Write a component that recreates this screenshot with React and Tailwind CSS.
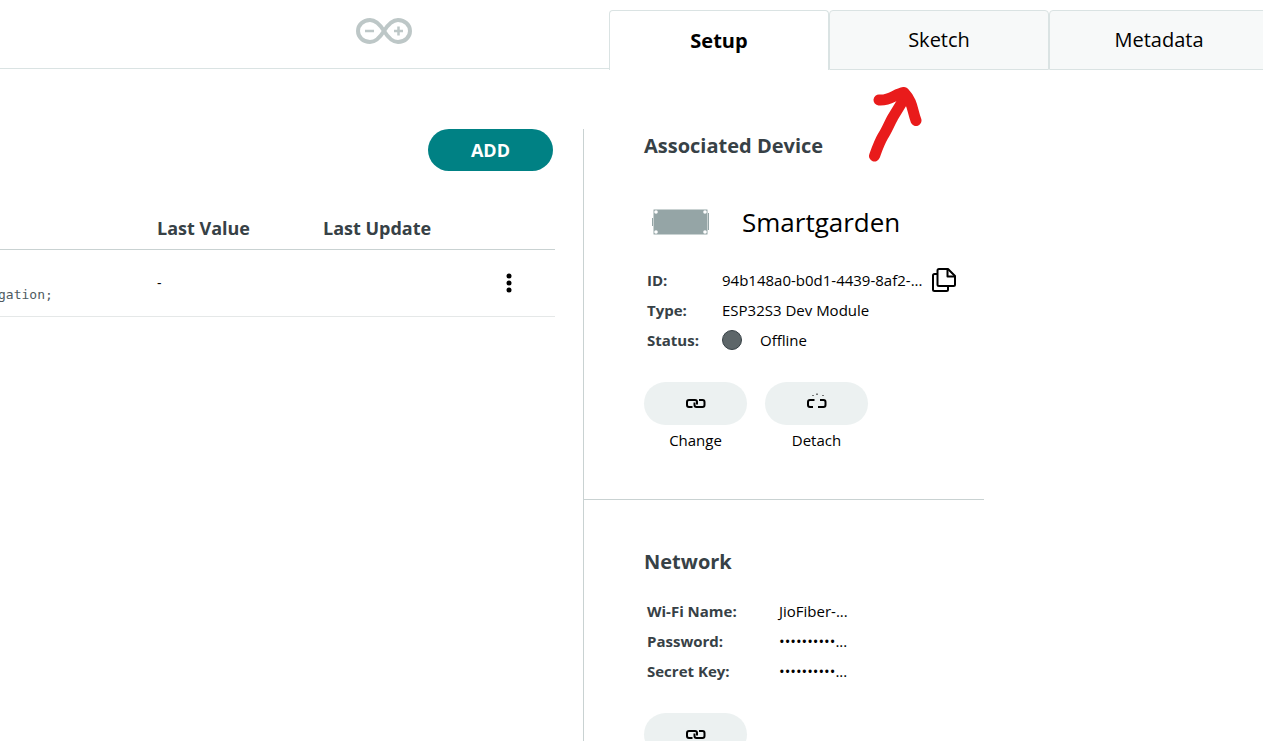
import { useState } from 'react'

const tabs = ['Setup', 'Sketch', 'Metadata']

const deviceButtons = [
  { label: 'Change', icon: LinkIcon },
  { label: 'Detach', icon: UnlinkIcon },
]

const network = [
  { label: 'Wi-Fi Name:', value: 'JioFiber-...' },
  { label: 'Password:', value: '••••••••••...' },
  { label: 'Secret Key:', value: '••••••••••...' },
]

function Logo() {
  return (
    <svg width="56" height="26" viewBox="0 0 56 26" fill="none" stroke="#bdc7c7">
      <path
        d="M28 13C24 6.500 20 2 14 2C7 2 2 7 2 13S7 24 14 24C20 24 24 19.500 28 13C32 6.500 36 2 42 2C49 2 54 7 54 13S49 24 42 24C36 24 32 19.500 28 13Z"
        strokeWidth="4"
      />
      <path d="M9 13H18M38 13H47M42.500 8.500V17.500" strokeWidth="2.500" />
    </svg>
  )
}

function Arrow() {
  return (
    <svg
      className="absolute left-[259px] top-[75px] pointer-events-none"
      width="55"
      height="78"
      viewBox="868 85 55 78"
      fill="none"
      stroke="#e91b1b"
      strokeLinecap="round"
      strokeLinejoin="round"
      strokeWidth="11"
    >
      <path d="M874.500 156C877 149 879 143 883 136C887 130 889 124 893 117L904 99" />
      <path d="M879 100C890 101 895 94 904 92.500C913 102 912 110 916 120.500" />
    </svg>
  )
}

function BoardIcon() {
  return (
    <svg width="58" height="28" viewBox="0 0 58 28">
      <rect x="0" y="10" width="3" height="8" fill="#95a5a6" />
      <rect x="55" y="5" width="2" height="17" fill="#95a5a6" />
      <rect x="1.500" y="1.500" width="54" height="25" rx="1" fill="#95a5a6" stroke="#c9d2d2" />
      <g fill="#fff">
        <circle cx="4" cy="4" r="1.800" />
        <circle cx="53" cy="4" r="1.800" />
        <circle cx="4" cy="24" r="1.800" />
        <circle cx="53" cy="24" r="1.800" />
      </g>
    </svg>
  )
}

function CopyIcon() {
  return (
    <svg width="24" height="24" viewBox="0 0 24 24" fill="none" stroke="#000" strokeWidth="2" strokeLinejoin="round">
      <path d="M5.500 6H2.500Q1 6 1 7.500V21.500Q1 23 2.500 23H14.500Q16 23 16 21.500V18.500" />
      <path d="M7 1H16L23 8V16.500Q23 18 21.500 18H7Q5.500 18 5.500 16.500V2.500Q5.500 1 7 1Z" />
      <path d="M15.500 1V8.500H23" />
    </svg>
  )
}

function LinkIcon() {
  return (
    <svg width="21" height="21" viewBox="0 0 21 21" fill="none" stroke="#000" strokeWidth="2">
      <path d="M7.500 14H4Q2 14 2 12V9Q2 7 4 7H10Q12 7 12 9V11.500" />
      <path d="M14 7H17.500Q19.500 7 19.500 9V12Q19.500 14 17.500 14H11.500Q9.500 14 9.500 12V9.500" />
    </svg>
  )
}

function UnlinkIcon() {
  return (
    <svg width="21" height="21" viewBox="0 0 21 21" fill="none" stroke="#000" strokeWidth="2">
      <path d="M8.500 7H4Q2 7 2 9V12Q2 14 4 14H7" />
      <path d="M14 7H17.500Q19.500 7 19.500 9V12Q19.500 14 17.500 14H12" />
      <path d="M6.500 2L7.500 3M11 0.500V2M17.500 2L16.500 3" strokeWidth="1" />
    </svg>
  )
}

function ActionButton({ label, icon: Icon }) {
  return (
    <div className="flex flex-col items-center w-[103px]">
      <button
        type="button"
        aria-label={label}
        className="flex items-center justify-center w-full h-[43px] rounded-full bg-[#ecf1f1] hover:bg-[#dae3e3]"
      >
        <Icon />
      </button>
      <span className="mt-[3px] text-[15px] leading-6">{label}</span>
    </div>
  )
}

function App() {
  const [active, setActive] = useState('Setup')

  return (
    <div className="h-screen overflow-hidden bg-white text-black font-['Open_Sans',sans-serif]">
      <header className="flex items-start">
        <div className="flex flex-1 justify-end h-[69px] pt-[18px] pr-[197px] border-b border-[#dae3e3]">
          <a href="#" aria-label="Home">
            <Logo />
          </a>
        </div>
        <nav className="relative flex mt-[10px] -mr-1.5">
          {tabs.map((tab) => (
            <button
              key={tab}
              type="button"
              onClick={() => setActive(tab)}
              className={`w-[220px] h-[60px] border rounded-t text-xl border-[#dae3e3] ${
                active === tab
                  ? 'bg-white border-b-0 font-bold'
                  : 'bg-[#f7f9f9]'
              }`}
            >
              {tab}
            </button>
          ))}
          <Arrow />
        </nav>
      </header>

      <main className="grid grid-cols-[583fr_680fr] pt-[59px]">
        {/* Variables */}
        <section className="pr-7">
          <div className="flex justify-end pr-0.5">
            <button
              type="button"
              className="w-[125px] h-[42px] rounded-full bg-[#008184] text-white text-lg font-bold hover:bg-[#005c5f]"
            >
              ADD
            </button>
          </div>
          <table className="w-full mt-9 table-fixed text-left">
            <thead>
              <tr className="h-[42px] border-b border-[#c9d2d2] text-lg text-[#374146]">
                <th className="w-[157px]"></th>
                <th className="w-[166px]">Last Value</th>
                <th>Last Update</th>
                <th className="w-[60px]"></th>
              </tr>
            </thead>
            <tbody>
              <tr className="h-[67px] border-b border-[#e5e8e8]">
                <td className="pt-6">
                  <code className="block -ml-0.5 text-[13px] leading-5 text-[#4e5b61] font-['DejaVu_Sans_Mono',monospace]">
                    gation;
                  </code>
                </td>
                <td className="text-sm">-</td>
                <td></td>
                <td>
                  <button type="button" aria-label="More options" className="block w-7 h-7">
                    <svg className="mx-auto" width="6" height="20" viewBox="0 0 6 20">
                      <circle cx="3" cy="3" r="2.500" />
                      <circle cx="3" cy="10" r="2.500" />
                      <circle cx="3" cy="17" r="2.500" />
                    </svg>
                  </button>
                </td>
              </tr>
            </tbody>
          </table>
        </section>

        <aside className="border-l border-[#c9d2d2]">
          {/* Associated device */}
          <section className="max-w-[400px] h-[371px] pl-[60px] border-b border-[#c9d2d2]">
            <h2 className="text-xl leading-[34px] font-bold text-[#374146]">
              Associated Device
            </h2>
            <div className="flex items-center mt-[39px] pl-2 gap-8">
              <BoardIcon />
              <span className="text-[26px] leading-10">Smartgarden</span>
            </div>
            <dl className="grid grid-cols-[75px_1fr] mt-[23px] pl-[3px] text-[15px] leading-[30px]">
              <dt className="font-bold text-[#374146]">ID:</dt>
              <dd className="flex items-center gap-2.5 whitespace-nowrap">
                94b148a0-b0d1-4439-8af2-...
                <button type="button" aria-label="Copy ID">
                  <CopyIcon />
                </button>
              </dd>
              <dt className="font-bold text-[#374146]">Type:</dt>
              <dd>ESP32S3 Dev Module</dd>
              <dt className="font-bold text-[#374146]">Status:</dt>
              <dd className="flex items-center gap-[18px]">
                <span className="size-5 rounded-full bg-[#5d6669] border border-[#374146]"></span>
                Offline
              </dd>
            </dl>
            <div className="flex gap-[18px] mt-[27px]">
              {deviceButtons.map((button) => (
                <ActionButton key={button.label} {...button} />
              ))}
            </div>
          </section>

          {/* Network */}
          <section className="max-w-[400px] pt-[45px] pl-[60px]">
            <h2 className="text-xl leading-[34px] font-bold text-[#374146]">
              Network
            </h2>
            <dl className="grid grid-cols-[132px_1fr] mt-[17px] pl-[3px] text-[15px] leading-[30px]">
              {network.map(({ label, value }) => (
                <div key={label} className="contents">
                  <dt className="font-bold text-[#374146]">{label}</dt>
                  <dd>{value}</dd>
                </div>
              ))}
            </dl>
            <div className="mt-[27px]">
              <ActionButton label="Change" icon={LinkIcon} />
            </div>
          </section>
        </aside>
      </main>
    </div>
  )
}

export default App
